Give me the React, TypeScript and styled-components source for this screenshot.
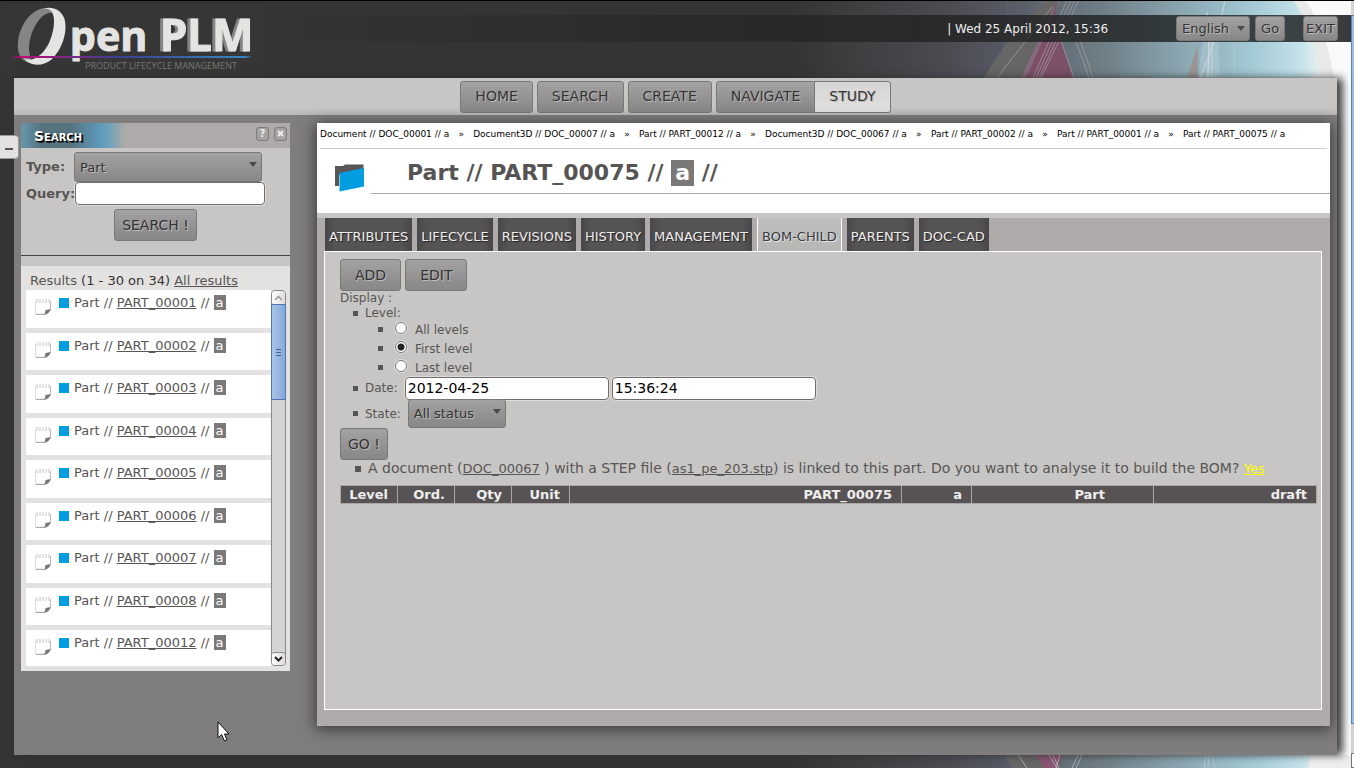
import React from 'react';
import styled, { createGlobalStyle, css } from 'styled-components';

const GlobalStyle = createGlobalStyle`
  *, *::before, *::after { box-sizing: border-box; }
  body {
    margin: 0;
    background: #333;
    color: #575554;
    font-family: "DejaVu Sans", Verdana, sans-serif;
    font-size: 12px;
    line-height: 16px;
  }
  button, input, select { font-family: inherit; margin: 0; }
  ul { list-style: none; margin: 0; padding: 0; }
  a { color: inherit; }
`;

const Page = styled.div`
  display: flex;
  min-height: 100vh;
  border-top: 1px solid #000;
  overflow: hidden;
`;

const Canvas = styled.div`
  position: relative;
  isolation: isolate;
  flex: 1;
  min-width: 0;
  display: flex;
  flex-direction: column;
  padding: 0 14px 13px;
  background:
    linear-gradient(to right, #343434 0, #3e3e40 60px, #4c4b52 160px, #565b66 220px, #72828a 320px, #8eabb6 400px, #a3c9d4 460px, #c4e2ea 510px, #f4f4f4 535px, #fff 550px)
    right top / 560px 100% no-repeat,
    #343434;
`;

const TopArt = styled.svg`
  position: absolute;
  z-index: -1;
  top: 0;
  right: 0;
`;

const BottomArt = styled.svg`
  position: absolute;
  z-index: -1;
  bottom: 0;
  right: 0;
`;

const PageScroll = styled.div`
  width: 3px;
  display: flex;
  flex-direction: column;
  padding-top: 14px;
  background: #d5d3d1;
  &::before {
    content: "";
    flex: 0 1 709px;
    background: #9dbbe3;
    border: 1px solid #5b83b8;
    border-right: 0;
  }
  &::after {
    content: "";
    height: 15px;
    margin-top: auto;
    background: #fff;
    border: 1px solid #777;
    border-right: 0;
  }
`;

const Header = styled.header`
  display: flex;
  height: 77px;
  margin: 0 -14px;
`;

const Logo = styled.svg`
  display: block;
  flex: none;
  margin-left: 2px;
  & .shaded { filter: drop-shadow(-3px 0 0 #858585); }
`;

const UserBar = styled.div`
  flex: 1;
  display: flex;
  align-items: center;
  justify-content: flex-end;
  height: 27px;
  margin-top: 14px;
  padding-right: 13px;
  background: linear-gradient(to right, rgba(40, 40, 40, 0), rgba(34, 34, 34, 0.8) 60%, rgba(30, 34, 34, 0.82) 94%, rgba(20, 20, 20, 0.84));
  color: #eee;
  font-size: 12px;
`;

const Clock = styled.span`
  margin-right: 68px;
`;

const raised = css`
  border: 1px solid #7a7877;
  border-radius: 3px;
  background: linear-gradient(#a3a1a1, #888787);
  color: #343434;
  text-shadow: 1px 1px 0 #bdbbba;
`;

const Button = styled.button<{ $tight?: boolean; $small?: boolean }>`
  ${raised}
  height: ${(p) => (p.$small ? 25 : 32)}px;
  padding: 0 ${(p) => (p.$small ? 5 : p.$tight ? 7 : 14)}px;
  font-size: ${(p) => (p.$small ? 13 : 14)}px;
  line-height: 20px;
`;

const SelectWrap = styled.span<{ $width: number }>`
  position: relative;
  display: inline-flex;
  width: ${(p) => p.$width}px;
  &::after {
    content: "";
    position: absolute;
    right: 5px;
    top: 10px;
    border: 4px solid transparent;
    border-top: 5px solid #4a4848;
    border-bottom: 0;
    pointer-events: none;
  }
`;

const Select = styled.select<{ $height: number }>`
  ${raised}
  appearance: none;
  width: 100%;
  height: ${(p) => p.$height}px;
  padding: 0 5px;
  font-size: 13px;
`;

const HeaderControls = styled.div`
  display: flex;
  gap: 5px;
  & > button:last-child { margin-left: 13px; padding: 0 2px; }
`;

const Shell = styled.div`
  flex: 1;
  display: flex;
  flex-direction: column;
  background: #807d7e;
  box-shadow: 6px 0 8px rgba(45, 45, 45, 0.9);
`;

const MainNav = styled.nav`
  display: flex;
  justify-content: center;
  align-items: flex-start;
  gap: 4px;
  height: 37px;
  padding-top: 3px;
  background: linear-gradient(#c7c6c4 80%, #b9b8b6);
`;

const navItem = css`
  ${raised}
  height: 32px;
  padding: 0 14px;
  font-size: 14px;
  line-height: 29px;
  text-decoration: none;
`;

const NavLink = styled.a`${navItem}`;

const NavPair = styled.div`
  display: flex;
  & > a:first-child { border-radius: 3px 0 0 3px; }
`;

const ActiveLink = styled.a`
  ${navItem}
  margin-left: -1px;
  border-radius: 0 3px 3px 0;
  background: linear-gradient(#d6d5d4, #e2e1df);
`;

const Columns = styled.div`
  flex: 1;
  display: flex;
  align-items: stretch;
  gap: 27px;
  padding: 8px 7px 29px;
`;

const Side = styled.aside`
  flex: none;
  align-self: flex-start;
  width: 269px;
  background: #e3e2e0;
`;

const SideHead = styled.div`
  display: flex;
  align-items: center;
  gap: 5px;
  height: 25px;
  padding: 0 3px 4px 13px;
  background: linear-gradient(to right, #6797ac 0, #56747f 20px, #56747f 50px, #5c98b8 78px, #6ea2bb 88px, #aeaaa9 104px);
`;

const SideTitle = styled.h2`
  flex: 1;
  margin: 4px 0 0;
  font-size: 14px;
  line-height: 18px;
  font-variant: small-caps;
  color: #fff;
  text-shadow: 1px 1px 0 #000, 2px 2px 0 #222;
`;

const TinyButton = styled.button`
  display: flex;
  align-items: center;
  justify-content: center;
  width: 13px;
  height: 14px;
  padding: 0;
  border: 1px solid #7d7b7a;
  border-radius: 3px;
  background: #a5a2a1;
  color: #eee;
  font-size: 10px;
  line-height: 10px;
  font-weight: bold;
`;

const SearchForm = styled.form`
  height: 118px;
  padding: 4px 5px 0;
  background: #c7c6c4;
`;

const FieldRow = styled.div`
  display: grid;
  grid-template-columns: 48px 1fr;
  align-items: center;
`;

const FieldLabel = styled.label`
  font-size: 13px;
  font-weight: bold;
`;

const TextInput = styled.input`
  height: 23px;
  padding: 0 2px;
  border: 1px solid #6f6c6a;
  border-radius: 4px;
  background: #fff;
  box-shadow: 0 0 0 1px #dddcda;
  color: #000;
  font-size: 14px;
`;

const QueryInput = styled(TextInput)`
  width: 190px;
  margin-left: 1px;
`;

const SearchAction = styled.div`
  display: flex;
  height: 47px;
  margin: 4px -5px 0;
  justify-content: center;
  align-items: flex-start;
  border-bottom: 1px solid #444;
`;

const ResultsInfo = styled.p`
  margin: 0;
  padding: 7px 9px 1px;
  color: #333;
  font-size: 13px;
  & > span, & > a { color: #575554; }
`;

const ResultsBox = styled.div`
  display: flex;
  height: 381px;
  padding: 0 4px 5px 5px;
`;

const ResultList = styled.ul`
  flex: 1;
  overflow: hidden;
`;

const Result = styled.li`
  display: flex;
  height: 38px;
  margin-bottom: 5px;
  padding: 5px 0 0 8px;
  background: #fff;
  font-size: 13px;
  line-height: 15px;
  &:nth-child(even) { height: 37px; }
`;

const SheetIcon = styled.svg`
  flex: none;
  margin: 3px 7px 0 0;
`;

const Square = styled.span`
  flex: none;
  width: 10px;
  height: 10px;
  margin: 3px 5px 0 0;
  background: #009ee0;
`;

const Revision = styled.span`
  padding: 0 2px;
  background: #7b7978;
  color: #fff;
`;

const ListScroll = styled.div`
  display: flex;
  flex-direction: column;
  width: 15px;
  border: 1px solid #8a8887;
  border-radius: 4px;
  background: #d5d4d2;
`;

const ScrollEnd = styled.span`
  display: flex;
  align-items: center;
  justify-content: center;
  height: 13px;
  border-radius: 3px;
  background: linear-gradient(to right, #fff, #dedddb);
  &:last-child { border-top: 1px solid #8a8887; }
`;

const Thumb = styled.span`
  display: flex;
  flex-direction: column;
  justify-content: center;
  align-items: center;
  gap: 2px;
  height: 96px;
  margin: 0 -1px auto;
  border: 1px solid #4d77b0;
  background: linear-gradient(to right, #a9c4ea, #86a9da);
  & > i { width: 5px; height: 1px; background: #3f648f; }
`;

const Panel = styled.main`
  flex: 1;
  min-width: 0;
  display: flex;
  flex-direction: column;
  background: #afabaa;
  box-shadow: 0 2px 14px 1px rgba(40, 40, 40, 0.85);
`;

const PanelHead = styled.div`
  padding-left: 3px;
  height: 95px;
  background: #fff;
  border-bottom: 5px solid #c7c6c4;
`;

const Crumbs = styled.nav`
  display: flex;
  height: 26px;
  margin-right: 3px;
  padding-top: 4px;
  border-bottom: 1px solid #ccc;
  color: #000;
  font-size: 9px;
  line-height: 14px;
  white-space: nowrap;
  & > a { text-decoration: none; }
  & > span { width: 24px; text-align: center; }
`;

const TitleRow = styled.div`
  display: flex;
  height: 45px;
`;

const FolderIcon = styled.svg`
  flex: none;
  margin: 14px 6px 0 14px;
`;

const Title = styled.h1`
  flex: 1;
  margin: 0;
  padding: 11px 0 0 36px;
  border-bottom: 1px solid #aaa;
  font-size: 22px;
  line-height: 26px;
  white-space: pre;
  & > ${Revision} { display: inline-block; padding: 0 4px; }
`;

const Tabs = styled.nav`
  display: flex;
  gap: 5px;
  padding-left: 8px;
  height: 33px;
`;

const Tab = styled.a<{ $active?: boolean }>`
  padding: 10px 4px 0;
  background: linear-gradient(to right, rgba(60, 58, 62, 0.5), transparent 10px calc(100% - 10px), rgba(60, 58, 62, 0.5)), #555354;
  color: #eee;
  text-decoration: none;
  text-shadow: 1px 1px 1px #222;
  font-size: 13px;
  line-height: 18px;
  ${(p) =>
    p.$active &&
    css`
      border: 1px solid #fff;
      border-width: 0 1px;
      background: linear-gradient(#bfbfbe, #b6b6b5);
      color: #3a3a3a;
      text-shadow: 1px 1px 1px #eee;
    `}
`;

const Content = styled.section`
  flex: 1;
  margin: 0 8px 16px 7px;
  padding: 7px 4px 0 15px;
  border: 1px solid #fff;
  background: #c7c6c4;
`;

const Actions = styled.div`
  display: flex;
  gap: 4px;
`;

const Caption = styled.div`
  line-height: 15px;
`;

const Options = styled.ul`
  padding-left: 25px;
`;

const square = css`
  &::before {
    content: "";
    flex: none;
    width: 5px;
    height: 5px;
    margin-right: 7px;
    background: #555;
  }
`;

const OptionRow = styled.li<{ $height: number; $indent?: boolean }>`
  display: flex;
  align-items: center;
  height: ${(p) => p.$height}px;
  margin-left: ${(p) => (p.$indent ? 13 : -12)}px;
  ${square}
  &::before { margin-right: ${(p) => (p.$indent ? 12 : 7)}px; }
  & > label { margin-right: 7px; }
`;

const Radio = styled.input`
  appearance: none;
  flex: none;
  width: 12px;
  height: 12px;
  margin: 0 8px 4px 0;
  border: 1px solid #777;
  border-radius: 50%;
  background: #fff;
  box-shadow: 0 0 0 1px #dddcda;
  &:checked { background: radial-gradient(#222 0 3px, #fff 4px); }
`;

const DateInput = styled(TextInput)`
  width: 204px;
  margin-right: 3px;
`;

const Notice = styled.p`
  display: flex;
  align-items: center;
  margin: 0;
  padding-left: 15px;
  font-size: 14px;
  line-height: 16px;
  white-space: pre;
  ${square}
  &::before { width: 6px; height: 6px; }
`;

const SmallLink = styled.a<{ $bright?: boolean }>`
  font-size: 13px;
  color: ${(p) => (p.$bright ? '#ff0' : 'inherit')};
`;

const Bom = styled.table`
  width: 100%;
  margin-top: 8px;
  border-collapse: collapse;
  table-layout: fixed;
  & th {
    height: 18px;
    padding: 0 9px 0 0;
    border: 1px solid #aaa8a7;
    background: #575354;
    color: #eee;
    font-size: 13px;
    line-height: 16px;
    text-align: right;
  }
  & th:nth-child(7) { padding-right: 48px; }
`;

const SideToggle = styled.button`
  position: absolute;
  left: 0;
  top: 134px;
  width: 19px;
  height: 24px;
  padding: 0;
  border: 1px solid #999;
  border-left: 0;
  border-radius: 0 4px 4px 0;
  background: #e3e2e0;
  display: flex;
  align-items: center;
  justify-content: center;
  &::before { content: ""; width: 8px; height: 2px; margin-top: 3px; background: #555; }
`;

const Pointer = styled.svg`
  position: absolute;
  left: 217px;
  top: 720px;
`;

const LogoMark = () => (
  <Logo width="263" height="77" viewBox="2 1 263 77" role="img" aria-label="OpenPLM">
    <defs>
      <linearGradient id="rule" x1="0" x2="1">
        <stop offset="0" stopColor="#c0087a" stopOpacity="0" />
        <stop offset="0.04" stopColor="#c0087a" />
        <stop offset="0.2" stopColor="#8a2584" />
        <stop offset="0.45" stopColor="#3a4090" />
        <stop offset="0.97" stopColor="#3a86c4" />
        <stop offset="1" stopColor="#3a86c4" stopOpacity="0" />
      </linearGradient>
    </defs>
    <rect x="2" y="3" width="263" height="73" fill="#363636" />
    <path d="M48 8C34 7 22 21 18.500 38C16 52 20 61 30 63C31 61 30 58 30 55C27 46 31 30 39 20C43 15 48 12 52 13C51 10 51 8 48 8Z" fill="#858585" />
    <path d="M43 8.500C52 6 61 9 64.500 19C68 32 62 50 51 60C42 67 29 66 24 58C33 63 43 55 49 43C55 30 56 14 50 10C48 8.500 46 8.500 43 8.500Z" fill="#e4e4e2" />
    <g fontFamily='"Noto Sans", "Open Sans", sans-serif' fontWeight="700" fill="#e4e4e2" stroke="#e4e4e2">
      <text x="70" y="51" fontSize="41">pen</text>
      <text className="shaded" x="160" y="51" fontSize="44">PLM</text>
    </g>
    <rect x="11" y="56" width="241" height="2" fill="url(#rule)" />
    <text x="85" y="69" fontSize="9" fontFamily='"Open Sans", sans-serif' fill="#777">PRODUCT LIFECYCLE MANAGEMENT</text>
  </Logo>
);

const HeaderArt = () => (
  <TopArt width="451" height="77" viewBox="0 1 451 77" aria-hidden="true">
    <path d="M147 0C128 16 103 44 84 78H125L157 0Z" fill="#666" />
    <path d="M157 0L121 78H132L152 34Z" fill="#86697a" />
    <path d="M157 0L150 24L126 78H173L160 38L154 22Z" fill="#7d5069" />
    <g fill="none" stroke="#b4b4b4" strokeWidth="1" opacity="0.55">
      <path d="M152 7C130 36 112 58 97 78M167 0L133 78M171 0L136 78M175 0L139 78M179 0L141 78" />
      <path d="M160 38L174 78M166 18C176 42 184 62 189 78M171 18C181 42 188 62 193 78" />
    </g>
    <path d="M106 0C109 12 105 38 103 78" fill="none" stroke="#697184" opacity="0.5" />
    <path d="M287 78L294 56V78ZM294 56L298 44V78H294Z" fill="#9a9696" />
    <path d="M306 12L298 78H320L318 30Z" fill="#b6d2da" opacity="0.4" />
    <g fill="none" stroke="#d6dcde" strokeWidth="1" opacity="0.8">
      <path d="M325 0C320 28 310 54 300 78M307 12C310 34 309 60 307 78M309 20V78M312 20V78" />
      <path d="M332 16C333 38 335 60 334 78" opacity="0.4" />
    </g>
    <path d="M393 0C408 22 418 52 421 78H451V0Z" fill="#e9e9e9" />
    <path d="M405 0C420 20 430 50 434 78H451V0Z" fill="#fafafa" />
  </TopArt>
);

const FooterArt = () => (
  <BottomArt width="451" height="13" viewBox="0 0 451 13" aria-hidden="true">
    <path d="M104 0H140L148 13H112Z" fill="#666" />
    <path d="M136 0H163L157 13H144Z" fill="#8a5674" />
    <path d="M118 0L127 13M149 0L157 13M153 0L159 13M160 0L156 13M178 0L172 13M182 0L176 13M306 0L304 13M309 0L308 13M312 0L315 13" stroke="#c6cccf" fill="none" opacity="0.7" />
    <path d="M411 0L408 13H451V0Z" fill="#eee" />
  </BottomArt>
);

const Sheet = () => (
  <SheetIcon width="18" height="18" viewBox="0 0 18 18" aria-hidden="true">
    <path d="M1.500 3V16H11L16.500 10.500V3" fill="#fff" stroke="#ddd" />
    <path d="M2 16.500H11" stroke="#aaa" />
    <path d="M16.500 3V11" stroke="#bbb" />
    <path d="M2 3H16" stroke="#e2e2e2" strokeWidth="4" strokeDasharray="2 1" />
    <path d="M10.500 17L11.500 12L17 11C16 14 14 16 10.500 17Z" fill="#777" />
  </SheetIcon>
);

const crumbs = [
  'Document // DOC_00001 // a',
  'Document3D // DOC_00007 // a',
  'Part // PART_00012 // a',
  'Document3D // DOC_00067 // a',
  'Part // PART_00002 // a',
  'Part // PART_00001 // a',
  'Part // PART_00075 // a',
];
const results = ['00001', '00002', '00003', '00004', '00005', '00006', '00007', '00008', '00012'];
const tabs = ['ATTRIBUTES', 'LIFECYCLE', 'REVISIONS', 'HISTORY', 'MANAGEMENT', 'BOM-CHILD', 'PARENTS', 'DOC-CAD'];
const levels = ['All levels', 'First level', 'Last level'];
const columns: [string, number | undefined][] = [
  ['Level', 57], ['Ord.', 57], ['Qty', 57], ['Unit', 58], ['PART_00075', undefined], ['a', 70], ['Part', 182], ['draft', 163],
];

export default function App() {
  return (
    <>
      <GlobalStyle />
      <Page>
        <Canvas>
          <HeaderArt />
          <FooterArt />
          <Header>
            <LogoMark />
            <UserBar>
              <Clock>| Wed 25 April 2012, 15:36</Clock>
              <HeaderControls>
                <SelectWrap $width={74}>
                  <Select $height={25} aria-label="Language"><option>English</option></Select>
                </SelectWrap>
                <Button $small>Go</Button>
                <Button $small>EXIT</Button>
              </HeaderControls>
            </UserBar>
          </Header>
          <Shell>
            <MainNav>
              <NavLink href="#home">HOME</NavLink>
              <NavLink href="#search">SEARCH</NavLink>
              <NavLink href="#create">CREATE</NavLink>
              <NavPair>
                <NavLink href="#navigate">NAVIGATE</NavLink>
                <ActiveLink href="#study">STUDY</ActiveLink>
              </NavPair>
            </MainNav>
            <Columns>
              <Side>
                <SideHead>
                  <SideTitle>Search</SideTitle>
                  <TinyButton aria-label="Help">?</TinyButton>
                  <TinyButton aria-label="Close">
                    <svg width="7" height="7" viewBox="0 0 7 7"><path d="M1 1L6 6M6 1L1 6" stroke="#eee" strokeWidth="2" /></svg>
                  </TinyButton>
                </SideHead>
                <SearchForm onSubmit={(e) => e.preventDefault()}>
                  <FieldRow>
                    <FieldLabel htmlFor="type">Type:</FieldLabel>
                    <SelectWrap $width={188}>
                      <Select $height={30} id="type"><option>Part</option></Select>
                    </SelectWrap>
                  </FieldRow>
                  <FieldRow>
                    <FieldLabel htmlFor="query">Query:</FieldLabel>
                    <QueryInput id="query" />
                  </FieldRow>
                  <SearchAction><Button $tight>SEARCH !</Button></SearchAction>
                </SearchForm>
                <ResultsInfo><span>Results</span> (1 - 30 on 34) <a href="#all">All results</a></ResultsInfo>
                <ResultsBox>
                  <ResultList>
                    {results.map((n) => (
                      <Result key={n}>
                        <Sheet />
                        <Square />
                        <span>Part // <a href={`#${n}`}>PART_{n}</a> // <Revision>a</Revision></span>
                      </Result>
                    ))}
                  </ResultList>
                  <ListScroll>
                    <ScrollEnd><svg width="9" height="6"><path d="M1 5L4.500 1.500L8 5" fill="none" stroke="#999" strokeWidth="1.500" /></svg></ScrollEnd>
                    <Thumb><i /><i /><i /></Thumb>
                    <ScrollEnd><svg width="9" height="6"><path d="M1 1L4.500 4.500L8 1" fill="none" stroke="#222" strokeWidth="2" /></svg></ScrollEnd>
                  </ListScroll>
                </ResultsBox>
              </Side>
              <Panel>
                <PanelHead>
                  <Crumbs>
                    {crumbs.map((c, i) => (
                      <React.Fragment key={c}>
                        {i > 0 && <span>»</span>}
                        <a href={`#crumb-${i}`}>{c}</a>
                      </React.Fragment>
                    ))}
                  </Crumbs>
                  <TitleRow>
                    <FolderIcon width="31" height="30" viewBox="0 0 31 30" aria-hidden="true">
                      <path d="M1 3H9L11 1.500H29.500V8L5 12V23H1Z" fill="#5a5655" />
                      <path d="M5.500 10L30 5V23.500L5.500 28.500Z" fill="#009ee0" />
                    </FolderIcon>
                    <Title>Part // PART_00075 // <Revision>a</Revision> //</Title>
                  </TitleRow>
                </PanelHead>
                <Tabs>
                  {tabs.map((t) => <Tab key={t} href={`#${t}`} $active={t === 'BOM-CHILD'}>{t}</Tab>)}
                </Tabs>
                <Content>
                  <Actions>
                    <Button>ADD</Button>
                    <Button>EDIT</Button>
                  </Actions>
                  <Caption>Display :</Caption>
                  <Options>
                    <OptionRow $height={14}>Level:</OptionRow>
                    {levels.map((l, i) => (
                      <OptionRow key={l} $height={19} $indent>
                        <Radio type="radio" name="level" id={`level-${i}`} defaultChecked={i === 1} />
                        <label htmlFor={`level-${i}`}>{l}</label>
                      </OptionRow>
                    ))}
                    <OptionRow $height={22}>
                      <label htmlFor="date">Date:</label>
                      <DateInput id="date" defaultValue="2012-04-25" />
                      <DateInput aria-label="Time" defaultValue="15:36:24" />
                    </OptionRow>
                    <OptionRow $height={29}>
                      <label htmlFor="state">State:</label>
                      <SelectWrap $width={98}>
                        <Select $height={29} id="state"><option>All status</option></Select>
                      </SelectWrap>
                    </OptionRow>
                  </Options>
                  <Actions><Button $tight>GO !</Button></Actions>
                  <Notice>
                    <span>
                      A document (<SmallLink href="#doc">DOC_00067</SmallLink> ) with a STEP file (<SmallLink href="#stp">as1_pe_203.stp</SmallLink>) is linked to this part. Do you want to analyse it to build the BOM? <SmallLink $bright href="#yes">Yes</SmallLink>
                    </span>
                  </Notice>
                  <Bom>
                    <colgroup>{columns.map(([c, w]) => <col key={c} width={w} />)}</colgroup>
                    <thead><tr>{columns.map(([c]) => <th key={c} scope="col">{c}</th>)}</tr></thead>
                  </Bom>
                </Content>
              </Panel>
            </Columns>
          </Shell>
          <SideToggle aria-label="Hide panel" />
          <Pointer width="14" height="21" viewBox="0 0 14 21" aria-hidden="true">
            <path d="M1 1V17L4.500 13.500L7.500 20L10 19L7.500 13H12Z" fill="#fff" stroke="#111" />
          </Pointer>
        </Canvas>
        <PageScroll />
      </Page>
    </>
  );
}
